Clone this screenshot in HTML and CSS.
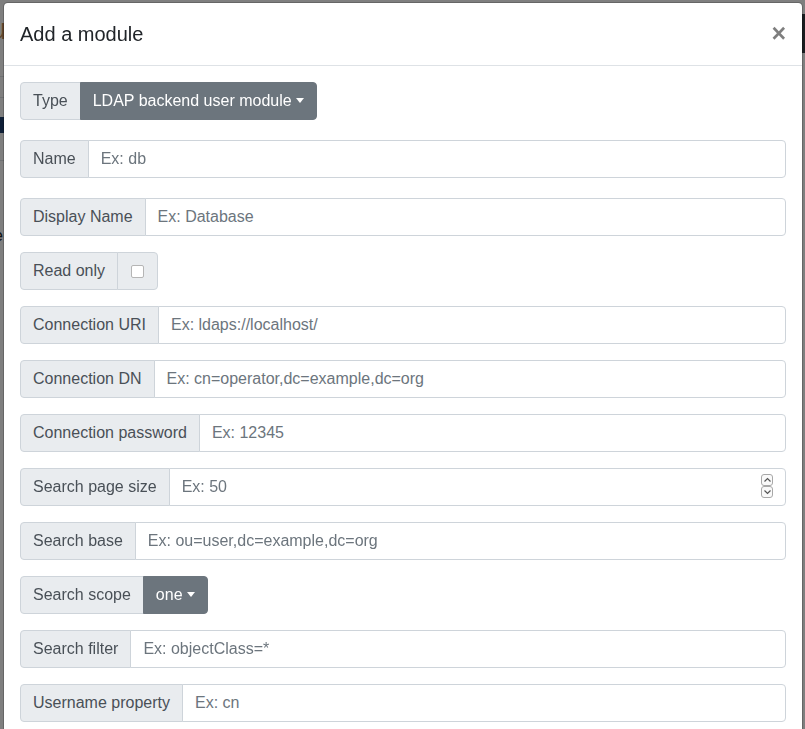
FILE: index.html
```html
<!DOCTYPE html>
<html lang="en">
<head>
<meta charset="utf-8">
<title>Add a module</title>
<link rel="stylesheet" href="styles.css">
</head>
<body>
<div class="page">
  <div class="bg-nav"></div>
  <div class="bg-title">u</div>
  <div class="bg-line l1"></div>
  <div class="bg-line l2"></div>
  <div class="bg-block"></div>
  <div class="bg-line l3"></div>
  <div class="bg-text">e</div>
</div>
<div class="backdrop"></div>
<div class="modal">
  <div class="modal-header">
    <h5 class="modal-title">Add a module</h5>
    <span class="close">×</span>
  </div>
  <div class="modal-body">
    <div class="input-group mb20">
      <span class="addon">Type</span>
      <span class="btn-drop">LDAP backend user module<span class="caret"></span></span>
    </div>
    <div class="input-group mb20">
      <span class="addon">Name</span>
      <input class="field" type="text" placeholder="Ex: db">
    </div>
    <div class="input-group mb16">
      <span class="addon">Display Name</span>
      <input class="field" type="text" placeholder="Ex: Database">
    </div>
    <div class="input-group mb16">
      <span class="addon">Read only</span>
      <span class="addon check-addon"><span class="checkbox"></span></span>
    </div>
    <div class="input-group mb16">
      <span class="addon">Connection URI</span>
      <input class="field" type="text" placeholder="Ex: ldaps://localhost/">
    </div>
    <div class="input-group mb16">
      <span class="addon">Connection DN</span>
      <input class="field" type="text" placeholder="Ex: cn=operator,dc=example,dc=org">
    </div>
    <div class="input-group mb16">
      <span class="addon">Connection password</span>
      <input class="field" type="text" placeholder="Ex: 12345">
    </div>
    <div class="input-group mb16">
      <span class="addon">Search page size</span>
      <div class="field-wrap">
        <input class="field" type="text" placeholder="Ex: 50">
        <span class="spinner">
          <span class="spin"><svg width="9" height="6" viewBox="0 0 9 6"><path d="M1.5 4.5 L4.5 1.5 L7.5 4.5" fill="none" stroke="#555" stroke-width="1.2"/></svg></span>
          <span class="spin"><svg width="9" height="6" viewBox="0 0 9 6"><path d="M1.5 1.5 L4.5 4.5 L7.5 1.5" fill="none" stroke="#555" stroke-width="1.2"/></svg></span>
        </span>
      </div>
    </div>
    <div class="input-group mb16">
      <span class="addon">Search base</span>
      <input class="field" type="text" placeholder="Ex: ou=user,dc=example,dc=org">
    </div>
    <div class="input-group mb16">
      <span class="addon">Search scope</span>
      <span class="btn-drop">one<span class="caret"></span></span>
    </div>
    <div class="input-group mb16">
      <span class="addon">Search filter</span>
      <input class="field" type="text" placeholder="Ex: objectClass=*">
    </div>
    <div class="input-group mb16">
      <span class="addon">Username property</span>
      <input class="field" type="text" placeholder="Ex: cn">
    </div>
  </div>
</div>
</body>
</html>
```

FILE: styles.css
```css
html, body {
  margin: 0;
  padding: 0;
  height: 100%;
  overflow: hidden;
  font-family: "Liberation Sans", Arial, sans-serif;
  font-size: 16px;
  line-height: 1.5;
  color: #212529;
  background: #fff;
}

.page {
  position: relative;
  height: 100%;
}

.bg-nav {
  position: absolute;
  right: 0;
  top: 14px;
  width: 10px;
  height: 39px;
  background: #343a40;
}

.bg-title {
  position: absolute;
  left: -10px;
  top: 14px;
  font-size: 30px;
  color: #c08a5a;
  line-height: 1;
}

.bg-line {
  position: absolute;
  left: 0;
  width: 20px;
  height: 1px;
  background: #dee2e6;
}
.bg-line.l1 { top: 76px; }
.bg-line.l2 { top: 97px; }
.bg-line.l3 { top: 160px; }

.bg-block {
  position: absolute;
  left: 0;
  top: 117px;
  width: 8px;
  height: 16px;
  background: #1e3f6e;
}

.bg-text {
  position: absolute;
  left: -6px;
  top: 224px;
  font-size: 16px;
  color: #212529;
}

.backdrop {
  position: fixed;
  inset: 0;
  background: #000;
  opacity: 0.5;
}

.modal {
  position: fixed;
  left: 3px;
  top: 2px;
  width: 800px;
  background: #fff;
  border: 1px solid rgba(0, 0, 0, 0.2);
  border-radius: 4.8px;
  box-sizing: border-box;
  background-clip: padding-box;
}

.modal-header {
  display: flex;
  align-items: flex-start;
  justify-content: space-between;
  padding: 16px;
  border-bottom: 1px solid #dee2e6;
}

.modal-title {
  margin: 0;
  font-size: 20px;
  font-weight: 400;
  line-height: 1.5;
  color: #212529;
}

.close {
  font-size: 25px;
  font-weight: 700;
  line-height: 1;
  color: #000;
  opacity: 0.5;
  padding: 2px 0 0;
  margin-right: 0;
}

.modal-body {
  padding: 16px;
}

.input-group {
  display: flex;
  align-items: stretch;
  height: 38px;
}

.mb20 { margin-bottom: 20px; }
.mb16 { margin-bottom: 16px; }

.addon {
  display: flex;
  align-items: center;
  padding: 6px 12px;
  font-size: 16px;
  line-height: 24px;
  color: #495057;
  background: #e9ecef;
  border: 1px solid #ced4da;
  border-radius: 4px;
  white-space: nowrap;
  box-sizing: border-box;
}

.input-group > .addon:first-child {
  border-top-right-radius: 0;
  border-bottom-right-radius: 0;
  margin-right: -1px;
}

.check-addon {
  border-top-left-radius: 0;
  border-bottom-left-radius: 0;
  padding: 6px 13px;
}

.checkbox {
  display: block;
  width: 11px;
  height: 11px;
  border: 1px solid #b5b5b5;
  border-radius: 2px;
  background: #fff;
}

.field,
.field-wrap {
  flex: 1;
  min-width: 0;
}

.field {
  display: block;
  height: 38px;
  box-sizing: border-box;
  padding: 6px 12px;
  font-family: inherit;
  font-size: 16px;
  line-height: 24px;
  color: #495057;
  background: #fff;
  border: 1px solid #ced4da;
  border-radius: 0 4px 4px 0;
  outline: none;
  margin: 0;
}

.field::placeholder {
  color: #6c757d;
  opacity: 1;
}

.field-wrap {
  position: relative;
  display: flex;
}

.field-wrap .field {
  width: 100%;
}

.spinner {
  position: absolute;
  right: 13px;
  top: 6px;
  display: flex;
  flex-direction: column;
  gap: 0;
}

.spin {
  display: flex;
  align-items: center;
  justify-content: center;
  width: 10px;
  height: 10px;
  border: 1px solid #a8a8a8;
  border-radius: 3px;
  background: #fafafa;
}

.btn-drop {
  display: flex;
  align-items: center;
  padding: 6px 12px;
  font-size: 16px;
  line-height: 24px;
  color: #fff;
  background: #6c757d;
  border: 1px solid #6c757d;
  border-radius: 0 4px 4px 0;
  white-space: nowrap;
  box-sizing: border-box;
}

.caret {
  display: inline-block;
  margin-left: 4px;
  width: 0;
  height: 0;
  border-top: 5px solid #fff;
  border-left: 4.5px solid transparent;
  border-right: 4.5px solid transparent;
  position: relative;
  top: -1px;
}
```
